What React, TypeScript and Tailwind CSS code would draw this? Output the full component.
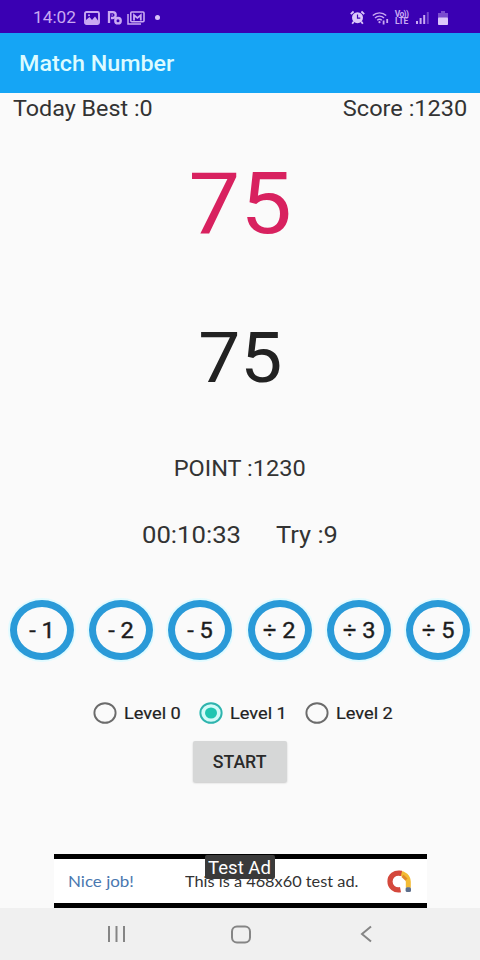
import React, { useState } from 'react';

const operations = ['- 1', '- 2', '- 5', '÷ 2', '÷ 3', '÷ 5'];
const levels = ['Level 0', 'Level 1', 'Level 2'];

function StatusBar() {
  return (
    <div className="flex h-[33px] items-center bg-[#3a00b3] pl-[33px] pr-[32px] pt-[2px] text-[#c9a9f2]">
      <span className="w-[51px] text-[16px] leading-none">
        <span className="inline-block origin-left scale-x-[1.08]">14:02</span>
      </span>

      {/* Picture */}
      <svg className="h-[14px] w-[16px]" viewBox="0 0 16 14">
        <rect x="1" y="1" width="14" height="12" rx="1.5" fill="none" stroke="currentColor" strokeWidth="1.9" />
        <path d="M2 12V9l3.5-3 2.5 3L11 5.5l3 4V12z" fill="currentColor" />
        <circle cx="5" cy="4.3" r="1" fill="currentColor" />
      </svg>

      {/* P with badge */}
      <svg className="ml-[7px] h-[15px] w-[15px]" viewBox="0 0 15 15" fill="none" stroke="currentColor">
        <path d="M2 13V2.2h3.8a2.9 2.9 0 0 1 0 5.8H4" strokeWidth="2.3" />
        <circle cx="11" cy="10.7" r="2.7" strokeWidth="2.4" />
        <path d="M4.5 5h1.5" strokeWidth="1.2" />
      </svg>

      {/* Mail stack */}
      <svg className="ml-[5px] h-[14px] w-[18px]" viewBox="0 0 18 14" fill="none" stroke="currentColor">
        <path d="M1 3v10h13" strokeWidth="1.5" />
        <rect x="3.8" y="1" width="13.2" height="9.8" rx="1" strokeWidth="1.6" />
        <path d="M7 9.5V4.2l3.4 2.7 3.4-2.7v5.3" strokeWidth="1.8" />
      </svg>

      <span className="ml-[10px] h-[5px] w-[5px] rounded-full bg-[#d9c2f8]" />

      <div className="ml-auto flex items-center">
        {/* Alarm */}
        <svg className="h-[15px] w-[15px] text-[#dcc8fa]" viewBox="0 0 15 14">
          <circle cx="7.5" cy="7.2" r="5.5" fill="currentColor" />
          <path d="M.8 3.6L3.6 1M14.2 3.6L11.4 1M3.8 11l-1.6 2.2M11.2 11l1.6 2.2" stroke="currentColor" strokeWidth="1.8" />
          <path d="M7.5 4v3.6h2.8" fill="none" stroke="#3a00b3" strokeWidth="1.2" />
        </svg>

        {/* Wifi */}
        <svg className="ml-[7px] h-[14px] w-[17px]" viewBox="0 0 17 14" fill="none" stroke="currentColor">
          <path d="M.8 4.6a9.5 9.5 0 0 1 13.4 0M3 7a6.3 6.3 0 0 1 9 0M5.2 9.3a3.4 3.4 0 0 1 4.6 0" strokeWidth="1.4" />
          <circle cx="7.5" cy="11.2" r="1.1" fill="currentColor" stroke="none" />
          <path d="M11.6 9.5v4M15.2 8v4" strokeWidth="1.8" />
        </svg>

        <div className="ml-[5px] flex w-[15px] flex-col items-center text-[8.5px] font-bold leading-[7px]">
          <span className="tracking-[-0.6px]">Vo))</span>
          <span className="tracking-[-0.2px]">LTE</span>
        </div>

        {/* Signal */}
        <svg className="ml-[7px] h-[13px] w-[13px]" viewBox="0 0 13 13" fill="currentColor">
          <rect x="0" y="10" width="2" height="3" />
          <rect x="3.6" y="7" width="2" height="6" />
          <rect x="7.2" y="4" width="2" height="9" />
          <rect x="10.8" y="1" width="2" height="12" opacity=".4" />
        </svg>

        {/* Battery */}
        <svg className="ml-[9px] h-[14px] w-[10px]" viewBox="0 0 10 14" fill="currentColor">
          <path d="M3 0h4v2h3v5H0V2h3z" opacity=".45" />
          <rect x="0" y="6.5" width="10" height="7.5" rx=".8" fill="#dcc8fa" />
        </svg>
      </div>
    </div>
  );
}

function AdBanner() {
  return (
    <div className="relative mx-auto flex h-[54px] w-[373px] items-center border-y-[5px] border-black bg-white font-[Lato,sans-serif]">
      <span className="ml-[14px] w-[117px] pt-px text-[14.5px] text-[#4a78b0]">
        <span className="inline-block origin-left scale-x-[1.17]">Nice job!</span>
      </span>
      <span className="whitespace-nowrap pt-px text-[14.5px] text-[#333]">
        <span className="inline-block origin-left scale-x-[1.125]">This is a 468x60 test ad.</span>
      </span>

      {/* AdMob mark */}
      <svg className="absolute left-[332px] top-[10px] h-[25px] w-[27px]" viewBox="0 0 27 25" fill="none">
        <path d="M13 4.2a9 8.6 0 0 1 9.3 8.6v6" stroke="#f3bb35" strokeWidth="5" />
        <path d="M15.5 4.4C8.500 2.800 4 7.200 4 12.400s4.500 9.400 10.500 8.200" stroke="#d4483c" strokeWidth="5.2" />
        <path d="M16.500 6.800l4 3.800" stroke="#e08a2c" strokeWidth="3" />
        <rect x="19.600" y="18.200" width="5.400" height="4.800" rx="1.500" fill="#5d6f8c" />
      </svg>

      <div className="absolute left-[151px] top-[-4px] flex h-[24px] w-[70px] items-center justify-center rounded-[2px] bg-[#3a3a3a] font-[Roboto,sans-serif] text-[18px] text-white">
        <span className="inline-block whitespace-nowrap scale-x-[1.03]">Test Ad</span>
      </div>
    </div>
  );
}

function NavBar() {
  return (
    <div className="flex h-[52px] items-center bg-[#f0f0f0] text-[#858585]">
      <svg className="ml-[107px] h-[18px] w-[19px]" viewBox="0 0 19 18" stroke="currentColor" strokeWidth="2">
        <path d="M2 1v16M9.500 1v16M17 1v16" />
      </svg>
      <svg className="ml-[105px] h-[19px] w-[20px]" viewBox="0 0 20 19" fill="none" stroke="currentColor" strokeWidth="2">
        <rect x="1" y="1.5" width="18" height="16" rx="5" />
      </svg>
      <svg className="ml-[109px] h-[18px] w-[12px]" viewBox="0 0 12 18" fill="none" stroke="currentColor" strokeWidth="2">
        <path d="M11 1.5L2 9l9 7.5" />
      </svg>
    </div>
  );
}

export default function App() {
  const [level, setLevel] = useState('Level 1');

  return (
    <div className="flex h-[960px] w-[480px] flex-col overflow-hidden bg-[#fafafa] font-[Roboto,sans-serif] text-[#333]">
      <StatusBar />

      <header className="flex h-[60px] items-center bg-[#15a5f5] pl-[19px] pt-px text-[22px] font-medium text-[#dcfbff]">
        <h1 className="origin-left scale-x-[1.06]">Match Number</h1>
      </header>

      <main className="flex flex-1 flex-col">
        <div className="flex h-[31px] items-center justify-between px-[13px] text-[22px]">
          <span className="origin-left scale-x-[1.06]">Today Best :0</span>
          <span className="origin-right scale-x-[1.07]">Score :1230</span>
        </div>

        <div className="mt-[30px] flex h-[100px] items-center justify-center text-[86px] leading-none text-[#d8215f]">
          <span className="scale-x-[1.07]">75</span>
        </div>

        <div className="mt-[62px] flex h-[84px] items-center justify-center text-[70px] leading-none text-[#222]">
          <span className="scale-x-[1.07]">75</span>
        </div>

        <div className="mt-[52px] flex h-[32px] items-center justify-center text-[22px]">
          <span className="scale-x-[1.07]">POINT :1230</span>
        </div>

        <div className="mt-[34px] flex h-[34px] items-center pl-[142px] text-[24px]">
          <span className="w-[134px] whitespace-nowrap">
            <span className="inline-block origin-left scale-x-[1.07]">00:10:33</span>
          </span>
          <span className="origin-left whitespace-nowrap scale-x-[1.06]">Try :9</span>
        </div>

        <div className="mt-[48px] flex justify-between px-[10px]">
          {operations.map((op) => (
            <button
              key={op}
              className="flex h-[60px] w-[64px] items-center justify-center rounded-[50%] border-[7.5px] border-[#2a9ad8] bg-[#fafafa] text-[22px] text-[#1c1c1c] ring-2 ring-[#e2fbff] [-webkit-text-stroke:0.4px_#1c1c1c]"
            >
              <span className="whitespace-nowrap pt-px scale-x-[1.07]">{op}</span>
            </button>
          ))}
        </div>

        <div className="mt-[38px] flex h-[30px] items-center pl-[93px]">
          {levels.map((name) => (
            <label key={name} className="flex w-[106px] items-center" onClick={() => setLevel(name)}>
              <svg className="h-[22px] w-[24px] shrink-0" viewBox="0 0 24 22" fill="none">
                {level === name && <ellipse cx="12" cy="11" rx="11.8" ry="10.8" fill="#d2fbf8" />}
                <ellipse cx="12" cy="11" rx="10.6" ry="9.8" stroke={level === name ? '#2fb3ad' : '#6b6b6b'} strokeWidth="1.9" />
                {level === name && <ellipse cx="12" cy="11" rx="6" ry="5.6" fill="#20c5b0" />}
              </svg>
              <span className="ml-[7px] origin-left whitespace-nowrap pt-px text-[17px] text-[#222] scale-x-[1.07] [-webkit-text-stroke:0.2px_#222]">{name}</span>
            </label>
          ))}
        </div>

        <div className="mt-[13px] flex justify-center">
          <button className="flex h-[41px] w-[94px] items-center justify-center rounded-[2px] bg-[#d6d7d7] pt-px text-[17.5px] font-medium text-[#2a2a2a] shadow-[0_1px_2px_rgba(0,0,0,0.2)]">
            <span className="scale-x-[1.01]">START</span>
          </button>
        </div>

        <div className="mt-auto">
          <AdBanner />
        </div>
      </main>

      <NavBar />
    </div>
  );
}
